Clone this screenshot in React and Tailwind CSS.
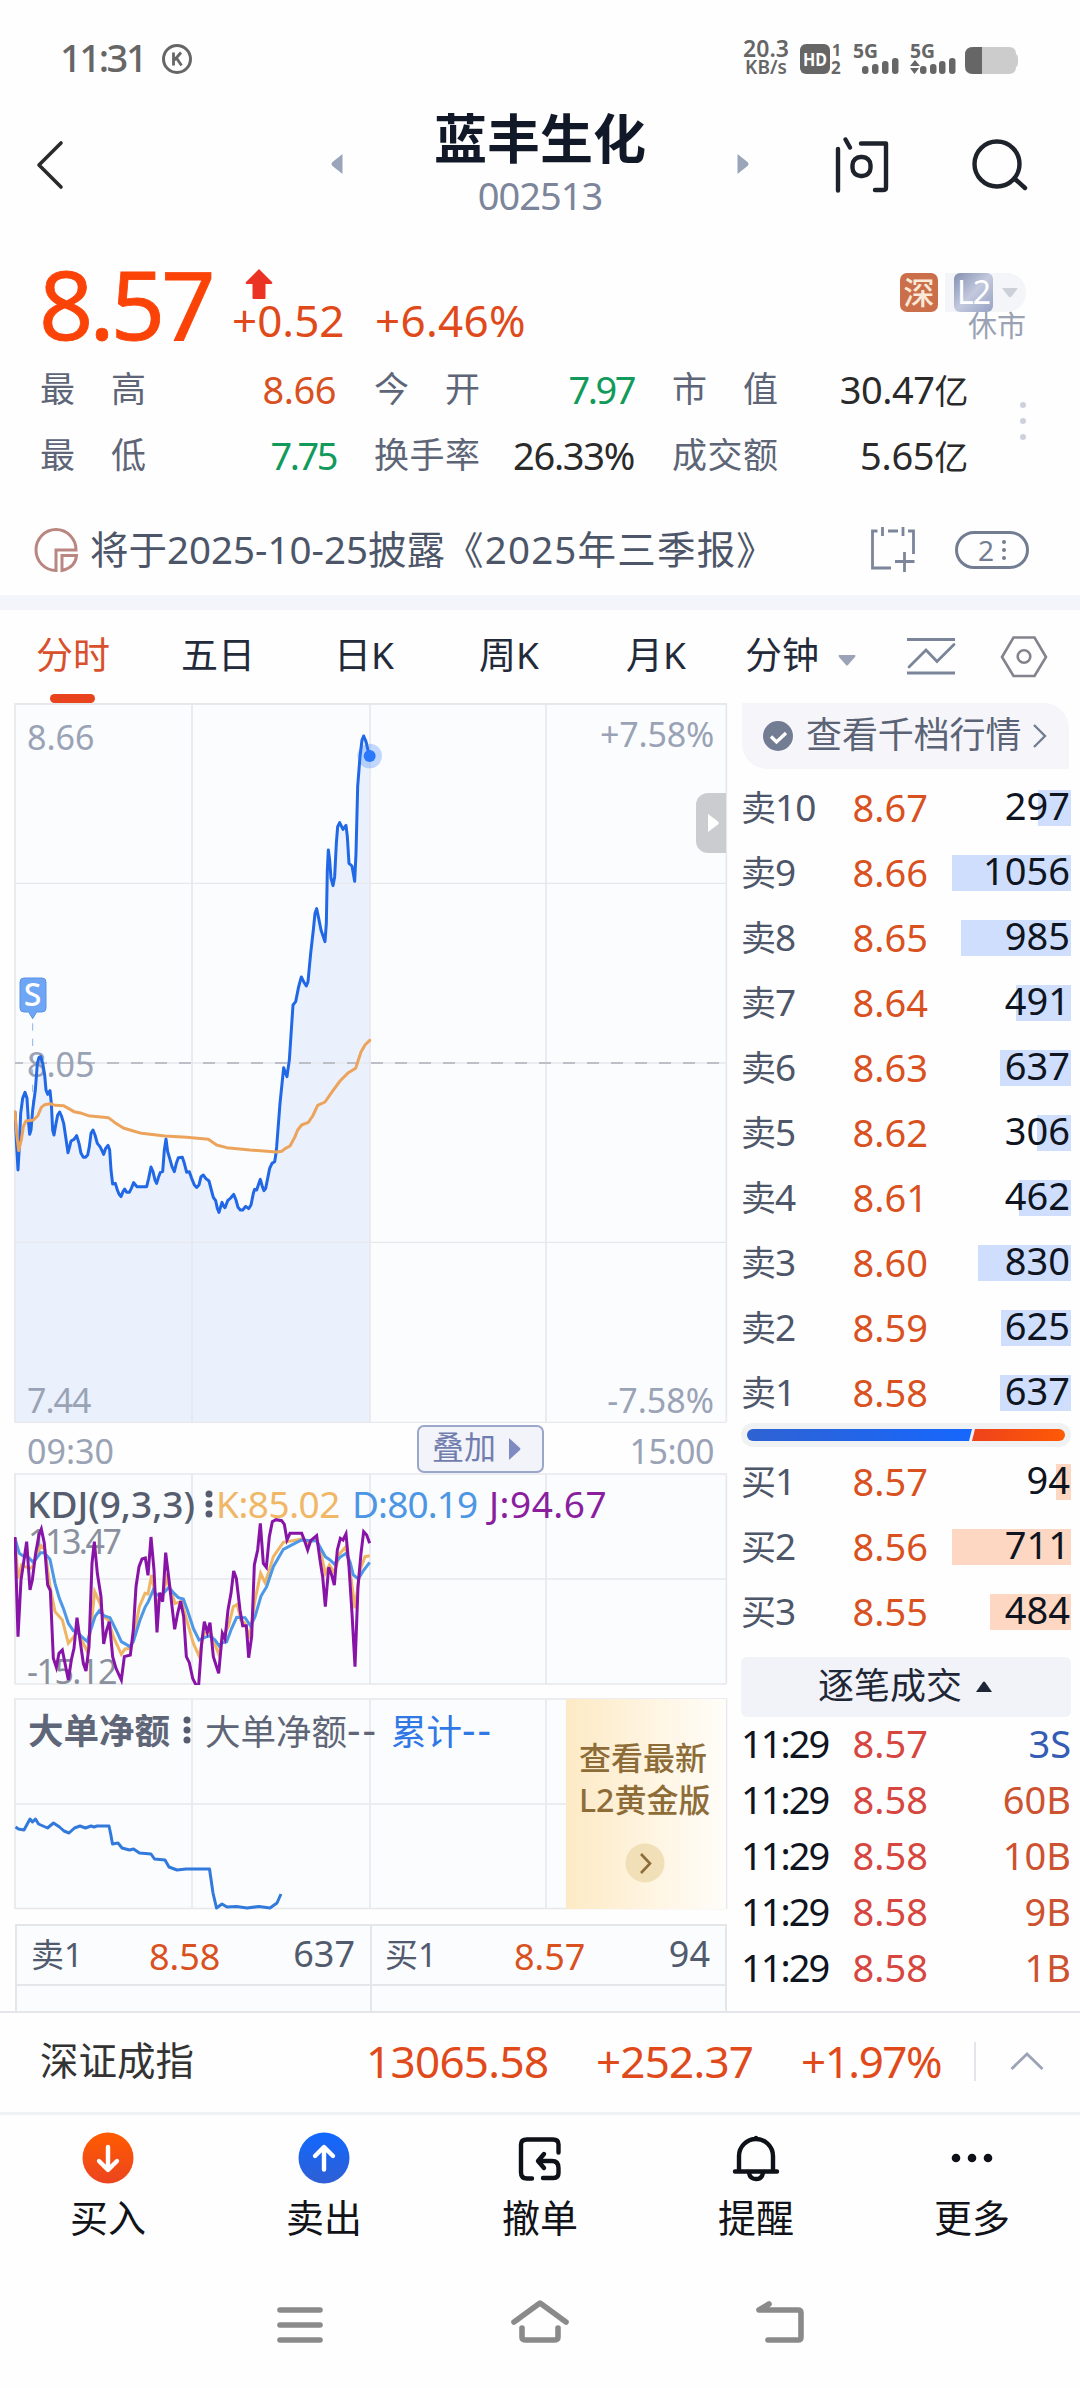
import React from 'react';

const sells = [
  ['卖10', '8.67', '297', 33],
  ['卖9', '8.66', '1056', 119],
  ['卖8', '8.65', '985', 110],
  ['卖7', '8.64', '491', 55],
  ['卖6', '8.63', '637', 71],
  ['卖5', '8.62', '306', 34],
  ['卖4', '8.61', '462', 52],
  ['卖3', '8.60', '830', 93],
  ['卖2', '8.59', '625', 70],
  ['卖1', '8.58', '637', 71],
];

const buys = [
  ['买1', '8.57', '94', 15],
  ['买2', '8.56', '711', 119],
  ['买3', '8.55', '484', 81],
];

const ticks = [
  ['11:29', '8.57', '3S'],
  ['11:29', '8.58', '60B'],
  ['11:29', '8.58', '10B'],
  ['11:29', '8.58', '9B'],
  ['11:29', '8.58', '1B'],
  ['11:29', '8.58', '2B'],
];

// intraday price, 3 units per pixel
const price =
  '45,455 50,560 54,630 58,560 62,460 68,415 75,397 81,415 85,480 89,523 93,510 98,450 106,390 112,310 117,292 122,290 128,310 134,345 138,390 143,403 150,392 154,430 158,510 162,525 168,490 173,465 179,456 185,470 191,490 197,530 204,578 209,560 213,543 222,538 230,527 237,550 243,580 250,592 256,592 263,585 268,560 273,520 279,510 285,525 292,550 300,560 306,572 311,583 317,565 324,556 329,570 333,630 338,672 346,670 352,690 357,702 363,710 369,695 374,687 380,697 388,697 394,685 401,668 411,680 440,680 446,655 453,621 459,635 465,660 470,670 476,650 481,637 488,635 493,570 498,537 503,575 509,595 516,620 523,635 529,610 535,593 547,592 553,610 560,637 568,635 575,655 583,675 590,682 597,675 603,650 610,645 617,655 627,663 634,690 640,712 647,722 652,745 657,757 662,740 666,727 670,737 675,743 683,722 692,714 701,703 708,720 714,742 721,750 728,750 737,739 746,746 753,735 760,700 764,688 770,690 776,672 781,658 787,680 792,692 797,685 803,655 809,625 816,610 824,605 828,580 830,560 840,430 851,323 861,350 868,300 874,210 879,135 887,125 896,80 904,51 911,65 919,78 924,65 932,-20 940,-90 945,-140 950,-154 955,-130 963,-90 975,-55 979,-110 982,-270 985,-330 989,-300 993,-245 999,-223 1004,-250 1009,-350 1013,-400 1019,-412 1029,-392 1038,-404 1042,-370 1047,-290 1056,-282 1064,-236 1068,-320 1073,-520 1080,-610 1086,-660 1091,-672 1098,-655 1108,-612';

const average =
  '45,455 50,520 56,572 64,540 70,500 78,483 100,480 113,468 124,442 134,434 150,431 165,436 190,437 205,445 222,455 245,460 265,467 325,473 345,488 370,504 400,513 425,520 495,528 560,532 625,538 650,555 680,563 750,570 830,576 845,574 855,566 870,558 885,530 893,510 905,495 925,487 938,468 953,436 975,426 995,397 1020,363 1045,338 1067,325 1075,300 1083,276 1095,255 1109,241';

const kdj = {
  k: '45,205 54,325 65,285 75,290 90,295 98,290 108,255 124,227 135,240 150,350 165,425 187,450 205,520 222,500 232,480 245,510 262,545 272,480 284,365 300,400 310,440 325,450 340,500 364,553 375,537 392,535 405,480 418,410 435,370 444,372 455,315 470,400 488,380 500,325 515,370 525,400 545,395 560,450 580,520 597,558 612,490 630,485 657,555 668,500 685,470 700,410 712,403 722,450 735,460 748,505 765,390 782,310 795,338 805,310 820,260 850,217 905,207 923,218 950,208 965,260 976,310 988,285 1003,308 1020,250 1038,230 1050,300 1065,415 1080,300 1095,260 1109,257',
  d: '45,205 58,250 70,258 85,262 98,275 107,268 122,248 133,248 150,268 165,340 178,385 190,415 205,460 220,482 232,486 245,500 262,515 272,480 285,440 298,422 313,438 330,443 348,480 364,515 390,530 400,515 420,450 435,412 445,395 460,360 470,375 488,372 507,352 520,368 535,383 550,387 562,420 580,475 597,510 615,502 630,497 645,510 657,527 667,518 680,515 695,475 710,442 735,443 752,468 765,440 783,378 800,350 820,290 850,238 890,217 905,210 950,213 965,240 976,260 990,270 1003,282 1020,262 1038,250 1050,275 1060,315 1075,327 1088,305 1109,277',
  j: '45,201 54,500 63,330 72,270 80,215 90,360 97,330 107,250 117,195 124,177 133,220 143,345 151,362 160,565 169,592 177,550 187,540 205,630 214,570 222,535 231,443 240,510 250,580 258,603 267,530 276,280 283,215 292,310 303,380 311,522 320,480 328,455 338,560 348,595 364,630 373,560 391,555 400,480 408,350 417,290 426,267 436,264 444,316 453,201 462,300 471,487 479,368 488,395 497,248 507,330 515,400 524,478 533,430 542,393 551,440 559,560 568,578 578,625 588,645 596,645 605,520 613,455 622,487 630,458 640,560 656,610 667,490 675,507 684,420 693,370 701,303 709,325 720,420 728,467 739,467 746,563 755,500 763,285 773,240 781,160 790,280 799,292 808,200 817,155 828,149 845,152 853,163 861,210 870,190 905,190 913,210 923,240 932,212 950,197 960,270 968,320 976,410 986,292 995,315 1003,345 1012,240 1021,205 1029,210 1038,192 1047,290 1056,430 1065,590 1074,350 1083,250 1091,185 1100,195 1109,220',
};

const netFlow =
  '15.5,1827 18.5,1829 24,1830 30,1819 32.5,1822 35.5,1819 38.5,1824 47.5,1828 53.5,1823 59.5,1827 64,1831 69,1833 74.5,1828 80,1826 85.5,1828 91,1826 94,1827 97,1826 109,1826 110.5,1833 112.5,1844 118,1843 122,1848 129.5,1850 133.5,1849 139.5,1853 151,1854 154.5,1859 165,1860 169,1867 177,1870 186,1869 209.5,1869 213,1893 216.5,1908 222,1904 227,1907 236.5,1906.5 247,1908 259,1906.5 270,1908 277,1903 281,1894';

const StatusBar = () => (
  <div className="h-[116px] flex items-start pt-[38px] pl-[60px] pr-[62px] text-[#666666]">
    <span className="w-[88px] text-[38px] leading-[38px] font-medium tracking-[-2.400px]">11:31</span>
    <svg className="ml-[13px] mt-[5px] w-8 h-8" viewBox="0 0 32 32" fill="none" stroke="currentColor" strokeWidth="3">
      <circle cx="16" cy="16" r="13.5" />
      <path d="M12.5 9.5v13M20 9.5l-6.5 7.5M15.5 15l5 7.5" strokeWidth="2.8" />
    </svg>
    <div className="ml-auto flex flex-col items-center w-[50px] font-semibold">
      <span className="text-[23px] leading-[20px]">20.3</span>
      <span className="text-[19px] leading-[18px]">KB/s</span>
    </div>
    <svg className="ml-[7px] mt-[-8px] w-[220px] h-[52px]" viewBox="799 30 220 52" fill="currentColor">
      <rect x="801" y="44" width="30" height="30" rx="6" />
      <text x="804" y="66" fontSize="18" fontWeight="700" fill="#fff" textLength="24" lengthAdjust="spacingAndGlyphs">HD</text>
      <text x="833" y="56" fontSize="16" fontWeight="700">1</text>
      <text x="832" y="74" fontSize="17" fontWeight="700">2</text>
      <text x="854" y="58" fontSize="19.500" fontWeight="700" textLength="25" lengthAdjust="spacingAndGlyphs">5G</text>
      <rect x="863" y="66" width="6.5" height="8" rx="3" />
      <rect x="873" y="64" width="6.5" height="10" rx="3" />
      <rect x="883" y="61" width="6.5" height="13" rx="3" />
      <rect x="893" y="58" width="6.5" height="16" rx="3" />
      <text x="911" y="58" fontSize="19.500" fontWeight="700" textLength="25" lengthAdjust="spacingAndGlyphs">5G</text>
      <path d="M911 66l5-6 5 6zM911 68h9l-4.500 6z" />
      <rect x="921" y="66" width="6.5" height="8" rx="3" />
      <rect x="931" y="64" width="6.5" height="10" rx="3" />
      <rect x="940" y="61" width="6.5" height="13" rx="3" />
      <rect x="950" y="58" width="6.5" height="16" rx="3" />
      <path d="M974 47h36q7 0 7 7q2 1 2 4v5q0 3-2 4q0 7-7 7h-36q-8 0-8-8v-11q0-8 8-8z" fill="#cccccc" />
      <path d="M983 47h-9q-8 0-8 8v11q0 8 8 8h9z" />
    </svg>
  </div>
);

const Header = () => (
  <div className="h-[132px] flex items-start">
    <svg className="mt-[22px] ml-[34px] w-[32px] h-[54px]" viewBox="34 138 32 54" fill="none" stroke="#2a2a2a" strokeWidth="3.6" strokeLinecap="round" strokeLinejoin="round">
      <path d="M61 143L39 165l22 22" />
    </svg>
    <svg className="mt-[38px] ml-[265px] w-[12px] h-[20px]" viewBox="0 0 12 20" fill="#9aa5ba">
      <path d="M11.500 0v20L1.500 12q-2-2 0-4z" />
    </svg>
    <div className="w-[394px] flex flex-col items-center">
      <h1 className="text-[53px] leading-[56px] mt-[-5px] font-bold text-[#111827]">蓝丰生化</h1>
      <span className="mt-[8px] text-[38px] leading-[40px] tracking-[-1px] text-[#7c859a]">002513</span>
    </div>
    <svg className="mt-[38px] w-[12px] h-[20px]" viewBox="0 0 12 20" fill="#9aa5ba">
      <path d="M.5 0v20l10-8q2-2 0-4z" />
    </svg>
    <svg className="mt-[18px] ml-[82px] w-[64px] h-[64px]" viewBox="831 134 64 64" fill="none" stroke="#1d222b" strokeWidth="4.4" strokeLinecap="round" strokeLinejoin="round">
      <path d="M838 149v41.500M845.500 139.500l4.500 8M861 143.500h25v44q0 2.500-3 2.500h-8" />
      <rect x="852.500" y="157" width="18" height="19" rx="8" />
    </svg>
    <svg className="mt-[20px] ml-[76px] w-[60px] h-[60px]" viewBox="971 136 60 60" fill="none" stroke="#1d222b" strokeWidth="4.400" strokeLinecap="round">
      <circle cx="997" cy="164" r="22.500" />
      <path d="M1015 179l10 9" />
    </svg>
  </div>
);

const Quote = () => (
  <div className="h-[108px] flex items-start text-[#e04a1b]">
    <span className="ml-[39px] mt-[7px] w-[172px] text-[95px] leading-[96px] tracking-[-4px] text-[#fb4307] [-webkit-text-stroke:0.8px_#fb4307]">8.57</span>
    <div className="ml-[21px] mt-[21px] w-[310px]">
      <svg className="ml-[13px] w-[28px] h-[32px]" viewBox="0 0 28 32" fill="#ea3323">
        <path d="M14 0l13 13q1 2-1 2h-5.500v14q0 1-1 1h-11q-1 0-1-1v-14h-5.500q-2 0-1-2z" />
      </svg>
      <div className="mt-[-3px] flex text-[44px] leading-[44px]">
        <span className="w-[143px]">+0.52</span>
        <span className="tracking-[0.300px]">+6.46%</span>
      </div>
    </div>
    <div className="ml-auto mr-[54px] mt-[25px] flex flex-col items-end">
      <div className="flex h-[39px] text-[31px] leading-[38px]">
        <span className="w-[38px] text-center rounded-[7px] bg-[#cb6f4b] text-[#fbe9d8] font-medium">深</span>
        <div className="ml-[7px] pl-[9px] w-[81px] flex items-center bg-[#f4f5f9] rounded-r-[19px]">
          <span className="w-[39px] h-[39px] rounded-[6px] bg-gradient-to-br from-[#8490b0] via-[#c3c9de] to-[#95a2c3] text-white text-[32px] text-center tracking-[-1px]">L2</span>
          <svg className="ml-[9px] w-[16px] h-[10px]" viewBox="0 0 16 10" fill="#ccd0d8">
            <path d="M0 0h16l-6.500 8.500q-1.500 1.500-3 0z" />
          </svg>
        </div>
      </div>
      <span className="text-[29px] leading-[28px] text-[#9aa2b3]">休市</span>
    </div>
  </div>
);

const Label = ({ children }) => (
  <span className="w-[106px] flex justify-between text-[35px] text-[#5d6577]">
    {children.split('').map((c) => (
      <i key={c} className="not-italic">{c}</i>
    ))}
  </span>
);

const Stats = () => (
  <div className="h-[142px] pl-[40px] flex">
    <div className="grid grid-cols-[106px_190px_38px_106px_154px_38px_106px_190px] grid-rows-[66px_66px] h-[132px] leading-[66px] text-[38px] text-[#2a2a2a]">
      <Label>最高</Label>
      <span className="text-right tracking-[-0.5px] text-[#d9511f]">8.66</span>
      <i />
      <Label>今开</Label>
      <span className="text-right tracking-[-2.5px] text-[#129a5c]">7.97</span>
      <i />
      <Label>市值</Label>
      <span className="text-right tracking-[-0.5px]">30.47<b className="font-normal text-[34px]">亿</b></span>
      <Label>最低</Label>
      <span className="text-right tracking-[-2.5px] text-[#129a5c]">7.75</span>
      <i />
      <Label>换手率</Label>
      <span className="text-right tracking-[-1.300px]">26.33%</span>
      <i />
      <Label>成交额</Label>
      <span className="text-right tracking-[-0.300px]">5.65<b className="font-normal text-[34px]">亿</b></span>
    </div>
    <div className="ml-[52px] pt-[46px] flex flex-col gap-[19px]">
      <i className="w-[6px] h-[6px] rounded-full bg-[#ccd1dc]" />
      <i className="mt-[-9px] w-[6px] h-[6px] rounded-full bg-[#ccd1dc]" />
      <i className="mt-[-9px] w-[6px] h-[6px] rounded-full bg-[#ccd1dc]" />
    </div>
  </div>
);

const Notice = () => (
  <div className="h-[97px] flex items-center pt-[7px]">
    <svg className="ml-[34px] w-[46px] h-[48px]" viewBox="34 526 46 48" fill="none" stroke="#b98682" strokeWidth="3">
      <path d="M56 570.500A20 20.500 0 1 1 76 550H56z" />
      <path d="M62 555.500h14.500q-1 12-14.500 15z" />
    </svg>
    <span className="ml-[10px] mt-[-2px] w-[780px] text-[38.500px] leading-[48px] text-[#4d5668] whitespace-nowrap">
      将于2025-10-25披露<span className="tracking-[1.200px]">《2025年三季报》</span>
    </span>
    <svg className="w-[46px] h-[48px]" viewBox="870 526 46 48" fill="none" stroke="#7c8599" strokeWidth="2.800">
      <path d="M891 568h-18.500v-37h5M888 531h10M908 531h5.500v23M882.500 527v9M903 527v9M904.500 552v20M895 561.500h19.500" />
    </svg>
    <div className="ml-[39px] w-[74px] h-[38px] rounded-full border-[3px] border-[#737d92] flex items-center justify-center gap-[8px] text-[#737d92]">
      <span className="text-[28px] leading-[28px]">2</span>
      <svg className="w-[4px] h-[22px]" viewBox="0 0 4 22" fill="currentColor">
        <circle cx="2" cy="3" r="2" />
        <circle cx="2" cy="11" r="2" />
        <circle cx="2" cy="19" r="2" />
      </svg>
    </div>
  </div>
);

const Tabs = () => (
  <div className="h-[93px] flex items-start pt-[22px] text-[37px] leading-[46px] text-[#232a3a]">
    <div className="w-[146px] pl-[36px] text-[#d9502c]">
      分时
      <div className="ml-[14px] mt-[16px] w-[45px] h-[9px] rounded-full bg-[#e8431d]" />
    </div>
    <span className="w-[154px] pl-[35px]">五日</span>
    <span className="w-[144px] pl-[34px]">日K</span>
    <span className="w-[146px] pl-[35px]">周K</span>
    <span className="w-[155px] pl-[36px]">月K</span>
    <span>分钟</span>
    <svg className="ml-[19px] mt-[23px] w-[18px] h-[12px]" viewBox="0 0 18 12" fill="#9ba4b7">
      <path d="M1 0h16q1 1 0 2l-7 8q-1 1-2 0L1 2q-1-1 0-2z" />
    </svg>
    <svg className="ml-[49px] mt-[4px] w-[52px] h-[40px]" viewBox="905 636 52 40" fill="none" stroke="#7b8599" strokeWidth="2.800">
      <path d="M907 639.500h48M907 673h48" />
      <path d="M909 667l17-17 11 11.500 17-17" strokeLinecap="round" />
    </svg>
    <svg className="ml-[43px] mt-[3px] w-[48px] h-[44px]" viewBox="1000 635 48 44" fill="none" stroke="#85828e" strokeWidth="2.600">
      <path d="M1013.500 637.500h21l11.500 19.500-11.500 19h-21L1002 657z" />
      <circle cx="1024" cy="656.500" r="6.300" />
    </svg>
  </div>
);

const PriceChart = () => (
  <div className="relative h-[721px] ml-[14px] w-[714px]">
    <svg className="block w-[714px] h-[721px]" viewBox="42 -771 2142 2163" fill="none">
      <rect x="45" y="-768" width="2133" height="2155" fill="#fbfcfe" />
      <polygon points={`45,1387 ${price} 1108,1387`} fill="#eaf1fc" />
      <g stroke="#e6e8ec" strokeWidth="5">
        <path d="M42 -768H2181" strokeWidth="6" />
        <path d="M45 -230H2178M45 847H2178M45 1387H2178" strokeWidth="4" />
        <path d="M45 -768V1387M576 -768V1387M1110 -768V1387M1638 -768V1387M2179 -768V1387" />
        <path d="M45 309H2178" strokeWidth="4" />
      </g>
      <path d="M45 309H2178" stroke="#bcbfc8" strokeWidth="6" strokeDasharray="36 36" strokeDashoffset="12" />
      <path d="M98 190V500" stroke="#8fb2e6" strokeWidth="3" strokeDasharray="22 24" />
    </svg>
    <div className="absolute inset-0 text-[34px] leading-[36px] text-[#9aa3b5]">
      <span className="absolute left-[13px] top-[16px]">8.66</span>
      <span className="absolute right-[14px] top-[13px] tracking-[-0.200px]">+7.58%</span>
      <span className="absolute left-[13px] top-[343px]">8.05</span>
      <span className="absolute left-[13px] top-[679px] tracking-[-1px]">7.44</span>
      <span className="absolute right-[14px] top-[679px]">-7.58%</span>
    </div>
    <svg className="absolute inset-0 w-[714px] h-[721px]" viewBox="42 -771 2142 2163" fill="none" strokeLinejoin="round">
      <polyline points={price} stroke="#2168e6" strokeWidth="9" />
      <polyline points={average} stroke="#eca35c" strokeWidth="9" strokeLinecap="round" />
      <circle cx="1109" cy="-612" r="37" fill="#2b78fb" opacity=".28" />
      <circle cx="1109" cy="-612" r="18" fill="#2b78fb" />
      <path d="M72 54h54q12 0 12 12v78q0 12-12 12h-16l-12 20-12-20h-14q-12 0-12-12v-78q0-12 12-12z" fill="#6ea5f5" stroke="#5b93e6" strokeWidth="3" />
      <text x="98" y="139" fontSize="96" textAnchor="middle" fontWeight="500" fill="#fff">S</text>
    </svg>
    <div className="absolute right-[2px] top-[90px] w-[30px] h-[60px] rounded-l-[12px] bg-[#cacccf] flex items-center pl-[12px]">
      <svg className="w-[11px] h-[18px]" viewBox="0 0 11 18" fill="#fff">
        <path d="M0 0l10 7.500q1.500 1.500 0 3L0 18z" />
      </svg>
    </div>
  </div>
);

const TimeAxis = () => (
  <div className="h-[49px] pl-[27px] pr-[14px] flex items-center text-[34px] leading-[40px] text-[#9aa3b5]">
    <span className="mt-[5px] w-[90px]">09:30</span>
    <div className="ml-[300px] w-[127px] h-[48px] rounded-[7px] border-2 border-[#9ba6cb] bg-[#f3f4fa] text-[#717dae] text-[32px] flex items-center pl-[13px]">
      <span className="mt-[-3px]">叠加</span>
      <svg className="ml-[13px] w-[12px] h-[22px]" viewBox="0 0 12 22" fill="#7f8bc0">
        <path d="M0 0l11 10q1 1 0 2L0 22z" />
      </svg>
    </div>
    <span className="ml-auto mt-[5px] tracking-[-0.500px]">15:00</span>
  </div>
);

const Dots = () => (
  <svg className="shrink-0 w-[8px] h-[28px]" viewBox="0 0 8 28" fill="#555d6e">
    <circle cx="4" cy="4" r="3.500" />
    <circle cx="4" cy="14" r="3.500" />
    <circle cx="4" cy="24" r="3.500" />
  </svg>
);

const KdjChart = () => (
  <div className="relative h-[213px] ml-[14px] w-[714px]">
    <svg className="block w-[714px] h-[213px]" viewBox="42 6 2142 639" fill="none">
      <rect x="45" y="12" width="2133" height="630" fill="#fbfcfe" />
      <g stroke="#e6e8ec" strokeWidth="5">
        <path d="M42 12H2181M45 327H2178M45 642H2178" />
        <path d="M45 12V642M576 12V642M1110 12V642M1638 12V642M2179 12V642" />
      </g>
    </svg>
    <div className="absolute inset-0 text-[34px] leading-[36px] text-[#8b909d]">
      <span className="absolute left-[14px] top-[51px] tracking-[-2.500px]">113.47</span>
      <span className="absolute left-[13px] top-[181px] tracking-[-1.500px]">-15.12</span>
    </div>
    <svg className="absolute inset-0 w-[714px] h-[213px]" viewBox="42 6 2142 639" fill="none">
      <polyline points={kdj.k} stroke="#f0b563" strokeWidth="9" />
      <polyline points={kdj.d} stroke="#4c97e6" strokeWidth="9" />
      <polyline points={kdj.j} stroke="#8714a6" strokeWidth="9" />
    </svg>
    <div className="absolute left-[13px] top-[12px] w-[690px] flex items-center text-[37px] leading-[40px] whitespace-nowrap">
      <span className="shrink-0 w-[178px] font-medium text-[#555d6e]">KDJ(9,3,3)</span>
      <Dots />
      <span className="shrink-0 ml-[3px] w-[136px] tracking-[-0.500px] text-[#f0b766]">K:85.02</span>
      <span className="shrink-0 w-[137px] tracking-[-0.900px] text-[#4c96e4]">D:80.19</span>
      <span className="tracking-[0.500px] text-[#8a1f9e]">J:94.67</span>
    </div>
  </div>
);

const NetFlow = () => (
  <div className="relative mt-[13px] h-[212px] ml-[14px] w-[714px]">
    <svg className="block w-[714px] h-[212px]" viewBox="14 1698 714 212" fill="none">
      <rect x="15" y="1699" width="711" height="210" fill="#fbfcfe" />
      <path d="M14 1699H727M15 1804H726M15 1908.500H726M15 1699V1909M192 1699V1909M370 1699V1909M546 1699V1909M726.500 1699V1909" stroke="#e6e8ec" strokeWidth="1.600" />
      <polyline points={netFlow} stroke="#3279dc" strokeWidth="3" strokeLinejoin="round" />
    </svg>
    <div className="absolute left-[14px] top-[11px] w-[540px] flex items-center text-[35.500px] leading-[40px] text-[#5f6677] whitespace-nowrap">
      <span className="shrink-0 w-[155px] font-bold">大单净额</span>
      <Dots />
      <span className="shrink-0 ml-[14px] w-[186px]">大单净额<span className="text-[42px] tracking-[2px]">--</span></span>
      <span className="text-[#2f78e6]">累计<span className="text-[42px] tracking-[2px]">--</span></span>
    </div>
    <div className="absolute right-[2px] top-[1px] w-[160px] h-[210px] pt-[38px] pl-[13px] bg-gradient-to-r from-[#fdeac5] to-[#fffdf9] text-[32px] leading-[42px] font-medium text-[#8d6c38] whitespace-nowrap">
      查看最新
      <br />
      L2黄金版
      <svg className="mt-[22px] ml-[46px] w-[40px] h-[40px]" viewBox="0 0 40 40" fill="none">
        <circle cx="20" cy="20" r="19.500" fill="#f1dfb7" />
        <path d="M16 11l9 9.500-9 9.500" stroke="#8d6c38" strokeWidth="2.600" />
      </svg>
    </div>
  </div>
);

const BestQuotes = () => (
  <div className="mt-[14px] ml-[15px] w-[712px] h-[90px] border-t-2 border-l-2 border-[#e4e6ea] bg-[#fbfcfe] text-[36px] text-[#525b6d]">
    <div className="h-[60px] flex border-b-2 border-[#e4e6ea]">
      <div className="w-1/2 pl-[14px] pr-[15px] flex items-center justify-between border-r-2 border-[#e4e6ea]">
        <span className="w-[118px] text-[33px]">卖1</span>
        <span className="flex-1 text-[#d9511f] mt-[3px]">8.58</span>
        <span className="mt-[-2px]">637</span>
      </div>
      <div className="w-1/2 pl-[13px] pr-[15px] flex items-center justify-between border-r-2 border-[#e4e6ea]">
        <span className="w-[129px] text-[33px]">买1</span>
        <span className="flex-1 text-[#d9511f] mt-[3px]">8.57</span>
        <span className="mt-[-2px]">94</span>
      </div>
    </div>
    <div className="h-[30px] flex">
      <i className="w-1/2 border-r-2 border-[#e4e6ea]" />
      <i className="w-1/2 border-r-2 border-[#e4e6ea]" />
    </div>
  </div>
);

const BookRow = ({ row, bar }) => (
  <div className="relative h-[65px] flex items-center">
    <div className={`absolute right-0 top-[15px] h-[36px] ${bar}`} style={{ width: row[3] }} />
    <span className="relative w-[87px] text-[#4e5769] text-[37px] tracking-[-1px]"><b className="font-normal text-[35px]">{row[0][0]}</b>{row[0].slice(1)}</span>
    <span className="relative w-[100px] pb-px text-right text-[#d9511f]">{row[1]}</span>
    <span className="relative flex-1 pr-px pb-[5px] text-right text-[#0e1420]">{row[2]}</span>
  </div>
);

const OrderBook = () => (
  <div className="ml-[13px] w-[330px] text-[38px] leading-[48px]">
    <div className="ml-px w-[327px] h-[66px] bg-[#f6f6fa] rounded-tr-[25px] rounded-bl-[25px] flex items-center pl-[21px] text-[36px] text-[#5b6476]">
      <svg className="w-[30px] h-[30px]" viewBox="0 0 30 30" fill="none">
        <circle cx="15" cy="15" r="15" fill="#727c92" />
        <path d="M8 15.500l5.500 5.500L23 12" stroke="#fff" strokeWidth="3.400" />
      </svg>
      <span className="ml-[13px] mt-[-2px] tracking-[-0.100px]">查看千档行情</span>
      <svg className="ml-[11px] w-[15px] h-[26px]" viewBox="0 0 15 26" fill="none" stroke="#727c92" strokeWidth="2.400">
        <path d="M2 2l11 11L2 24" />
      </svg>
    </div>
    <div className="h-[6px]" />
    {sells.map((row) => (
      <BookRow key={row[0]} row={row} bar="bg-[#cfdefd]" />
    ))}
    <div className="mt-[-2px] h-[24px] rounded-full bg-[#f0f1f3] p-[6px]">
      <svg className="block w-[318px] h-[12px]" viewBox="0 0 318 12">
        <defs>
          <linearGradient id="sell">
            <stop stopColor="#2f62d2" />
            <stop offset="1" stopColor="#1667fd" />
          </linearGradient>
          <linearGradient id="buy">
            <stop stopColor="#ee421c" />
            <stop offset="1" stopColor="#fe5a05" />
          </linearGradient>
        </defs>
        <path d="M6 0h219l-3 12H6A6 6 0 0 1 6 0z" fill="url(#sell)" />
        <path d="M228 0h84a6 6 0 0 1 0 12h-87z" fill="url(#buy)" />
      </svg>
    </div>
    <div className="h-[2px]" />
    {buys.map((row) => (
      <BookRow key={row[0]} row={row} bar="bg-[#fdd7c1]" />
    ))}
    <div className="mt-[13px] h-[60px] rounded-[6px] bg-[#f2f3f8] flex items-center pl-[77px] text-[36px] text-[#1f2737]">
      <span className="mt-[-2px]">逐笔成交</span>
      <svg className="ml-[13px] w-[18px] h-[12px]" viewBox="0 0 18 12" fill="#1f2737">
        <path d="M1 11L8 1q1-1 2 0l7 10z" />
      </svg>
    </div>
    <div className="mt-[-2px]">
      {ticks.map((t, i) => (
        <div key={i} className="h-[56px] flex items-center">
          <span className="w-[97px] tracking-[-2px] text-[#0e1420]">{t[0]}</span>
          <span className="w-[90px] text-right text-[#d6463f]">{t[1]}</span>
          <span className={t[2].endsWith('S') ? 'flex-1 text-right text-[#345cb5]' : 'flex-1 text-right text-[#cd5230]'}>{t[2]}</span>
        </div>
      ))}
    </div>
  </div>
);

const IndexBar = () => (
  <div className="h-[104px] border-t-2 border-b-[3px] border-t-[#e4e6ea] border-b-[#eff2f3] flex items-center pb-[3px] text-[44px] text-[#e04a1b] whitespace-nowrap">
    <span className="ml-[40px] w-[326px] text-[38.500px] text-[#333333]">深证成指</span>
    <span className="w-[230px] tracking-[-0.700px]">13065.58</span>
    <span className="w-[205px] tracking-[-0.800px]">+252.37</span>
    <span className="tracking-[-1.500px] w-[173px]">+1.97%</span>
    <i className="w-[2px] h-[39px] bg-[#e3e5ea]" />
    <svg className="ml-[34px] w-[34px] h-[20px]" viewBox="0 0 34 20" fill="none" stroke="#9ba3b5" strokeWidth="2.800">
      <path d="M1.500 18L17 3l15.500 15" />
    </svg>
  </div>
);

const Action = ({ label, children }) => (
  <div className="w-[216px] flex flex-col items-center">
    <svg className="w-[56px] h-[56px]" viewBox="-28 -28 56 56" fill="none" stroke="#0e1118" strokeWidth="4.400" strokeLinecap="round" strokeLinejoin="round">
      {children}
    </svg>
    <span className="mt-[7px] text-[38px] leading-[48px] text-[#111318]">{label}</span>
  </div>
);

const ActionBar = () => (
  <div className="h-[165px] pt-[15px] flex">
    <Action label="买入">
      <defs>
        <linearGradient id="red" x2="0" y2="1">
          <stop stopColor="#ff5c00" />
          <stop offset="1" stopColor="#ec4420" />
        </linearGradient>
        <linearGradient id="blue" x2="0" y2="1">
          <stop stopColor="#1168ff" />
          <stop offset="1" stopColor="#2f5fd4" />
        </linearGradient>
      </defs>
      <circle r="25.500" fill="url(#red)" stroke="none" />
      <path d="M0-11v22M-9 3l9 9 9-9" stroke="#fff" />
    </Action>
    <Action label="卖出">
      <circle r="25.500" fill="url(#blue)" stroke="none" />
      <path d="M0 11.500v-22M-9-2l9-9 9 9" stroke="#fff" />
    </Action>
    <Action label="撤单">
      <path d="M-8 20.500h-5q-6 0-6-6v-28q0-5 6-5h26q5.500 0 5.500 5v8" />
      <path d="M4-4l-6 7 6 7M-1 3h13q6.500 0 6.500 7v5q0 5-5 5H3" />
    </Action>
    <Action label="提醒">
      <path d="M-17 13V-2a17 17 0 0 1 34 0v15M-21 13.500h42M0-20v0" />
      <path d="M-7 15q1 6 7 6t7-6" />
    </Action>
    <Action label="更多">
      <g fill="#0e1118" stroke="none">
        <circle cx="-16" r="4.300" />
        <circle r="4.300" />
        <circle cx="16" r="4.300" />
      </g>
    </Action>
  </div>
);

const SystemNav = () => (
  <div className="h-[108px] flex items-start pt-[12px]">
    <svg className="ml-[270px] w-[540px] h-[60px]" viewBox="270 2292 540 60" fill="none" stroke="#8a8a8a" strokeWidth="5.600" strokeLinecap="round" strokeLinejoin="round">
      <path d="M280 2310h40M280 2325h40M280 2340h40" />
      <path d="M514 2322l26-19 26 19M522 2328v9q0 3 4 3h28q4 0 4-3v-9" />
      <path d="M769 2304l-10 6h39q3 0 3 3v24q0 3-3 3h-30" />
    </svg>
  </div>
);

const App = () => (
  <div className="w-[1080px] h-[2388px] overflow-hidden bg-[#fefefe] flex flex-col font-['Noto_Sans','Noto_Sans_CJK_SC',sans-serif]">
    <StatusBar />
    <Header />
    <Quote />
    <Stats />
    <Notice />
    <div className="h-[15px] shrink-0 bg-[#f4f5fa]" />
    <Tabs />
    <div className="h-[1308px] shrink-0 flex overflow-hidden">
      <div className="w-[728px]">
        <PriceChart />
        <TimeAxis />
        <div className="mt-[-1px]">
          <KdjChart />
        </div>
        <NetFlow />
        <BestQuotes />
      </div>
      <OrderBook />
    </div>
    <IndexBar />
    <ActionBar />
    <SystemNav />
  </div>
);

export default App;
